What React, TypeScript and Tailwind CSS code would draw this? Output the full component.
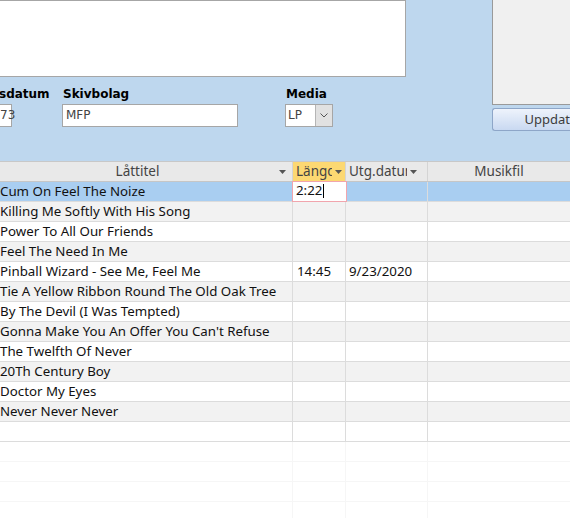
import React from "react";

const songs = [
  { title: "Cum On Feel The Noize", len: "2:22", date: "" },
  { title: "Killing Me Softly With His Song", len: "", date: "" },
  { title: "Power To All Our Friends", len: "", date: "" },
  { title: "Feel The Need In Me", len: "", date: "" },
  { title: "Pinball Wizard - See Me, Feel Me", len: "14:45", date: "9/23/2020" },
  { title: "Tie A Yellow Ribbon Round The Old Oak Tree", len: "", date: "" },
  { title: "By The Devil (I Was Tempted)", len: "", date: "" },
  { title: "Gonna Make You An Offer You Can't Refuse", len: "", date: "" },
  { title: "The Twelfth Of Never", len: "", date: "" },
  { title: "20Th Century Boy", len: "", date: "" },
  { title: "Doctor My Eyes", len: "", date: "" },
  { title: "Never Never Never", len: "", date: "" },
];

const cols = "grid grid-cols-[293px_53px_82px_1fr]";
const cellFont = { fontFamily: '"Noto Sans", "Open Sans", sans-serif' };

function Arrow() {
  return (
    <svg width="7" height="4" viewBox="0 0 7 4" className="shrink-0">
      <path d="M0 0h7L3.5 4z" fill="#555" />
    </svg>
  );
}

export default function App() {
  return (
    <div className="h-[518px] w-[570px] overflow-hidden bg-white" style={cellFont}>
      {/* form header */}
      <div className="flex h-[161px] bg-[#bed7ee]">
        <div className="w-[407px]">
          <div className="h-[77px] border border-l-0 border-[#a6a6a6] bg-white" />
          <div className="mt-[8px] flex text-[12px]" style={{ fontFamily: '"DejaVu Sans", Verdana, sans-serif' }}>
            <div className="w-[62px]">
              <div className="-ml-[1px] font-bold leading-[18px] text-black">sdatum</div>
              <div className="mt-[1px] h-[23px] w-[12px] border border-l-0 border-[#a6a6a6] bg-white text-[12px] leading-[21px] text-[#444]">
                73
              </div>
            </div>
            <div className="w-[223px]">
              <div className="ml-[1px] font-bold leading-[18px] text-black">Skivbolag</div>
              <div className="mt-[1px] h-[23px] w-[176px] border border-[#a6a6a6] bg-white pl-[3px] leading-[21px] text-[#444]">
                MFP
              </div>
            </div>
            <div>
              <div className="ml-[1px] font-bold leading-[18px] text-black">Media</div>
              <div className="mt-[1px] flex h-[23px] w-[48px] border border-[#a6a6a6] bg-white">
                <div className="flex-1 pl-[2px] leading-[21px] text-[#444]">LP</div>
                <div className="flex w-[17px] items-center justify-center border-l border-[#b5b5b5] bg-[#e1e1e1]">
                  <svg width="8" height="5" viewBox="0 0 8 5">
                    <path d="M0.5 0.5L4 4L7.5 0.5" fill="none" stroke="#555" strokeWidth="1" />
                  </svg>
                </div>
              </div>
            </div>
          </div>
        </div>
        <div className="ml-[86px] flex-1">
          <div className="h-[105px] border border-r-0 border-t-0 border-[#9a9a9a] bg-[#f0f0f0]" />
          <div className="mt-[3px] h-[23px] rounded-l-[3px] border border-r-0 border-[#8ea6c8] bg-gradient-to-b from-[#eef3fc] to-[#c9d9f1] pl-[32px] text-[13px] leading-[21px] text-[#3c3c3c]">
            Uppdat
          </div>
        </div>
      </div>

      {/* datasheet */}
      <div className="border-t border-[#c8c8c8]">
        <div className={`${cols} h-[20px] border-b border-[#c6c6c6] bg-[#e9e9e9] text-[13.5px] text-[#444]`}>
          <div className="flex items-center border-r border-[#d4d4d4] pr-[6px]">
            <span className="flex-1 pr-[4px] text-center leading-[19px]">Låttitel</span>
            <Arrow />
          </div>
          <div className="flex items-center border-r border-[#d4d4d4] bg-[#fcd872] pl-[3px]">
            <span className="w-[36px] overflow-hidden whitespace-nowrap leading-[19px]">Längd</span>
            <span className="ml-[3px]"><Arrow /></span>
          </div>
          <div className="flex items-center border-r border-[#d4d4d4] pl-[3px]">
            <span className="w-[58px] overflow-hidden whitespace-nowrap leading-[19px]">Utg.datum</span>
            <span className="ml-[3px]"><Arrow /></span>
          </div>
          <div className="text-center leading-[19px]">Musikfil</div>
        </div>

        {songs.map((s, i) => {
          const bg = i === 0 ? "bg-[#a9cef1]" : i % 2 === 1 ? "bg-[#f2f2f2]" : "bg-white";
          return (
            <div key={s.title} className={`${cols} h-[20px] border-b border-[#dcdcdc] text-[13.3px] text-[#111] ${bg}`}>
              <div className="overflow-hidden whitespace-nowrap border-r border-[#dcdcdc] leading-[19px]">{s.title}</div>
              {i === 0 ? (
                <div className="-mt-[1px] -ml-[1px] h-[21px] w-[55px] border-[1.5px] border-[#f1a5ad] bg-white pl-[3px] leading-[17px]">
                  2:22<span className="ml-[1px] inline-block h-[14px] w-px bg-black align-middle" />
                </div>
              ) : (
                <div className="border-r border-[#dcdcdc] pl-[4px] leading-[19px]">{s.len}</div>
              )}
              <div className="border-r border-[#dcdcdc] pl-[3px] leading-[19px]">{s.date}</div>
              <div />
            </div>
          );
        })}

        {/* new record row */}
        <div className={`${cols} h-[20px] border-b border-[#dcdcdc] bg-white`}>
          <div className="border-r border-[#dcdcdc]" />
          <div className="border-r border-[#dcdcdc]" />
          <div className="border-r border-[#dcdcdc]" />
          <div />
        </div>

        {/* empty area */}
        {[0, 1, 2, 3].map((n) => (
          <div key={n} className={`${cols} h-[20px] border-b border-[#f6f6f6] bg-white`}>
            <div className="border-r border-[#f6f6f6]" />
            <div className="border-r border-[#f6f6f6]" />
            <div className="border-r border-[#f6f6f6]" />
            <div />
          </div>
        ))}
      </div>
    </div>
  );
}
